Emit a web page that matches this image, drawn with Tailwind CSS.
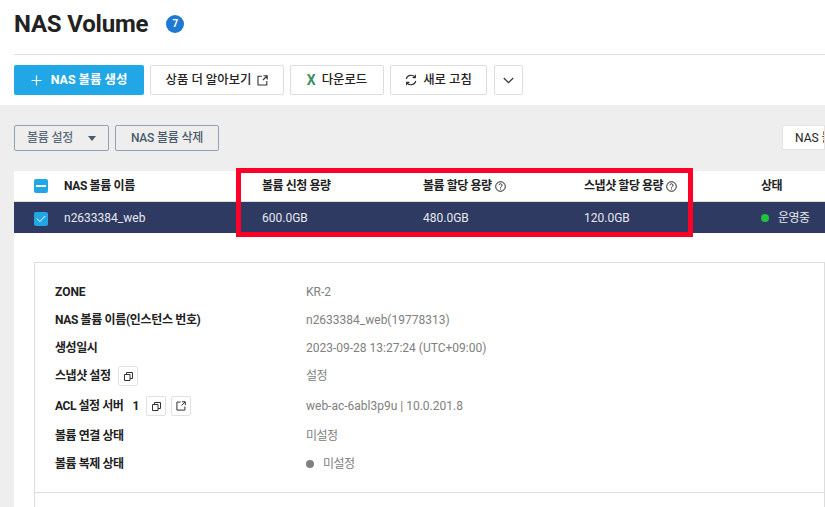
<!DOCTYPE html>
<html lang="ko">
<head>
  <meta charset="UTF-8" />
  <title>NAS Volume</title>
  <script src="https://cdn.jsdelivr.net/npm/@tailwindcss/browser@4"></script>
</head>
<body class="relative w-[825px] h-[507px] overflow-hidden bg-[#eeeeee] text-[#222222] text-[12px] font-['Roboto','Noto_Sans_CJK_KR',sans-serif]">

  <!-- Header -->
  <header class="bg-white h-[105px] pl-[14px]">
    <div class="h-[55px] border-b border-[#e0e0e0] flex items-center pb-[7px] gap-[18px]">
      <h1 class="text-[24px] leading-[32px] font-bold text-[#222222] tracking-[-0.2px]">NAS Volume</h1>
      <span class="w-[18px] h-[18px] rounded-full bg-[#1f78d1] text-white text-[10px] font-bold flex items-center justify-center">7</span>
    </div>
    <div class="flex gap-[6px] pt-[10px] text-[12.4px]">
      <button class="h-[30px] w-[130px] rounded-[2px] bg-[#22a7e6] text-white font-bold flex items-center justify-center gap-[9px]">
        <svg width="11" height="11" viewBox="0 0 11 11" fill="none" stroke="white" stroke-width="1.2"><path d="M5.5 0.5v10M0.5 5.5h10" /></svg>
        NAS 볼륨 생성
      </button>
      <button class="h-[30px] w-[134px] rounded-[2px] bg-white border border-[#dddddd] font-medium flex items-center justify-center gap-[6px]">
        상품 더 알아보기
        <svg width="11" height="11" viewBox="0 0 11 11" fill="none" stroke="#333333" stroke-width="1.1"><path d="M5 1.2H1v8.8h8.8V6M6 5l4-4M6.5 .8h3.7v3.7" /></svg>
      </button>
      <button class="h-[30px] w-[94px] rounded-[2px] bg-white border border-[#dddddd] font-medium flex items-center justify-center gap-[6px]">
        <span class="text-[14px] font-bold text-[#3f8f5f]">X</span>
        다운로드
      </button>
      <button class="h-[30px] w-[97px] rounded-[2px] bg-white border border-[#dddddd] font-medium flex items-center justify-center gap-[6px]">
        <svg width="12" height="12" viewBox="0 0 12 12" fill="none" stroke="#333333" stroke-width="1.1"><path d="M1.2 5A5 5 0 0 1 10 3.2M10.8 7A5 5 0 0 1 2 8.8M10.4 .8v2.8H7.6M1.6 11.2V8.4h2.8" /></svg>
        새로 고침
      </button>
      <button class="ml-[1px] h-[30px] w-[29px] rounded-[2px] bg-white border border-[#dddddd] flex items-center justify-center">
        <svg width="11" height="7" viewBox="0 0 11 7" fill="none" stroke="#333333" stroke-width="1.2"><path d="M.8 1l4.7 4.7L10.2 1" /></svg>
      </button>
    </div>
  </header>

  <main class="pl-[14px]">
    <!-- Toolbar -->
    <div class="flex h-[66px] pt-[20px] relative">
      <div class="flex gap-[6px] tracking-[-0.2px]">
        <button class="h-[26px] w-[95px] rounded-[2px] border border-[#8ca3b8] text-[#5a6b7b] font-medium flex items-center pl-[12px] gap-[15px]">
          볼륨 설정
          <span class="w-0 h-0 border-x-[4px] border-x-transparent border-t-[5px] border-t-[#4a5a6a]"></span>
        </button>
        <button class="h-[26px] w-[104px] rounded-[2px] border border-[#8ca3b8] text-[#4a5a6a] font-medium flex items-center justify-center">NAS 볼륨 삭제</button>
      </div>
      <div class="ml-[563px] h-[25px] w-[60px] bg-white border border-[#e4e4e4] flex items-center pl-[12px] whitespace-nowrap overflow-hidden">NAS 볼륨 이름</div>
    </div>

    <!-- Table -->
    <div class="bg-white h-[336px]">
      <div class="h-[31px] flex items-center border-b border-[#dddddd] font-bold">
        <div class="w-[50px] pl-[20px]">
          <span class="w-[14px] h-[14px] rounded-[2px] bg-[#22a7e6] flex items-center justify-center"><span class="w-[10px] h-[2px] bg-white"></span></span>
        </div>
        <div class="w-[198px] tracking-[-0.35px]">NAS 볼륨 이름</div>
        <div class="w-[161px] tracking-[-0.45px]">볼륨 신청 용량</div>
        <div class="w-[161px] flex items-center gap-[3px] tracking-[-0.45px]">볼륨 할당 용량
          <svg width="11" height="11" viewBox="0 0 11 11" fill="none" stroke="#222222" stroke-width="1"><circle cx="5.5" cy="5.5" r="4.8" /><path d="M4 4.2a1.5 1.5 0 1 1 2.2 1.4c-.5.3-.7.6-.7 1.1M5.5 7.6v.9" /></svg>
        </div>
        <div class="w-[177px] flex items-center gap-[3px] tracking-[-0.45px]">스냅샷 할당 용량
          <svg width="11" height="11" viewBox="0 0 11 11" fill="none" stroke="#222222" stroke-width="1"><circle cx="5.5" cy="5.5" r="4.8" /><path d="M4 4.2a1.5 1.5 0 1 1 2.2 1.4c-.5.3-.7.6-.7 1.1M5.5 7.6v.9" /></svg>
        </div>
        <div class="tracking-[-0.45px]">상태</div>
      </div>
      <div class="h-[31px] flex items-center bg-[#2e3a61] text-[#e6e8ee]">
        <div class="w-[50px] pl-[20px] pt-[2px]">
          <span class="w-[14px] h-[14px] rounded-[2px] bg-[#22a7e6] flex items-center justify-center">
            <svg width="10" height="8" viewBox="0 0 10 8" fill="none" stroke="white" stroke-width="1"><path d="M.8 3.6l3 3L9.2 1" /></svg>
          </span>
        </div>
        <div class="w-[198px]">n2633384_web</div>
        <div class="w-[161px]">600.0GB</div>
        <div class="w-[161px]">480.0GB</div>
        <div class="w-[177px]">120.0GB</div>
        <div class="flex items-center gap-[9px] tracking-[-0.5px]"><span class="w-[8px] h-[8px] rounded-full bg-[#22c03c]"></span>운영중</div>
      </div>

      <!-- Detail -->
      <div class="ml-[20px] mt-[29px] border border-[#dddddd] h-[260px]">
        <dl class="h-[230px] border-b border-[#dddddd] pt-[15px] pl-[20px]">
          <div class="flex items-center h-[28px]"><dt class="w-[251px] font-bold">ZONE</dt><dd class="text-[#808080]">KR-2</dd></div>
          <div class="flex items-center h-[28px]"><dt class="w-[251px] font-bold tracking-[-0.35px]">NAS 볼륨 이름(인스턴스 번호)</dt><dd class="text-[#808080]">n2633384_web(19778313)</dd></div>
          <div class="flex items-center h-[28px]"><dt class="w-[251px] font-bold tracking-[-0.45px]">생성일시</dt><dd class="text-[#808080]">2023-09-28 13:27:24 (UTC+09:00)</dd></div>
          <div class="flex items-center h-[28px]">
            <dt class="w-[251px] font-bold flex items-center gap-[8px] tracking-[-0.45px]">스냅샷 설정
              <span class="w-[20px] h-[20px] border border-[#e2e2e2] rounded-[2px] flex items-center justify-center">
                <svg width="9" height="9" viewBox="0 0 9 9" fill="none" stroke="#333333" stroke-width="1"><path d="M.5 2.5h5.5v6H.5zM2.5 2.5V.5h6v6H6" /></svg>
              </span>
            </dt>
            <dd class="text-[#808080] tracking-[-0.45px]">설정</dd>
          </div>
          <div class="flex items-center h-[32px]">
            <dt class="w-[251px] font-bold flex items-center"><span class="tracking-[-0.45px]">ACL 설정 서버</span><span class="ml-[9px]">1</span>
              <span class="ml-[7px] w-[20px] h-[20px] border border-[#e2e2e2] rounded-[2px] flex items-center justify-center">
                <svg width="9" height="9" viewBox="0 0 9 9" fill="none" stroke="#333333" stroke-width="1"><path d="M.5 2.5h5.5v6H.5zM2.5 2.5V.5h6v6H6" /></svg>
              </span>
              <span class="ml-[5px] w-[20px] h-[20px] border border-[#e2e2e2] rounded-[2px] flex items-center justify-center">
                <svg width="10" height="10" viewBox="0 0 11 11" fill="none" stroke="#333333" stroke-width="1.1"><path d="M5 1.2H1v8.8h8.8V6M6 5l4-4M6.5 .8h3.7v3.7" /></svg>
              </span>
            </dt>
            <dd class="text-[#808080]">web-ac-6abl3p9u | 10.0.201.8</dd>
          </div>
          <div class="flex items-center h-[28px]"><dt class="w-[251px] font-bold tracking-[-0.45px]">볼륨 연결 상태</dt><dd class="text-[#808080] tracking-[-0.5px]">미설정</dd></div>
          <div class="flex items-center h-[28px]"><dt class="w-[251px] font-bold tracking-[-0.45px]">볼륨 복제 상태</dt>
            <dd class="text-[#808080] flex items-center gap-[9px] tracking-[-0.5px]"><span class="w-[8px] h-[8px] rounded-full bg-[#808080]"></span>미설정</dd>
          </div>
        </dl>
      </div>
    </div>
  </main>

  <!-- Red highlight -->
  <div class="absolute left-[236px] top-[168px] w-[457px] h-[69px] border-[5px] border-[#ff0028]"></div>
</body>
</html>
